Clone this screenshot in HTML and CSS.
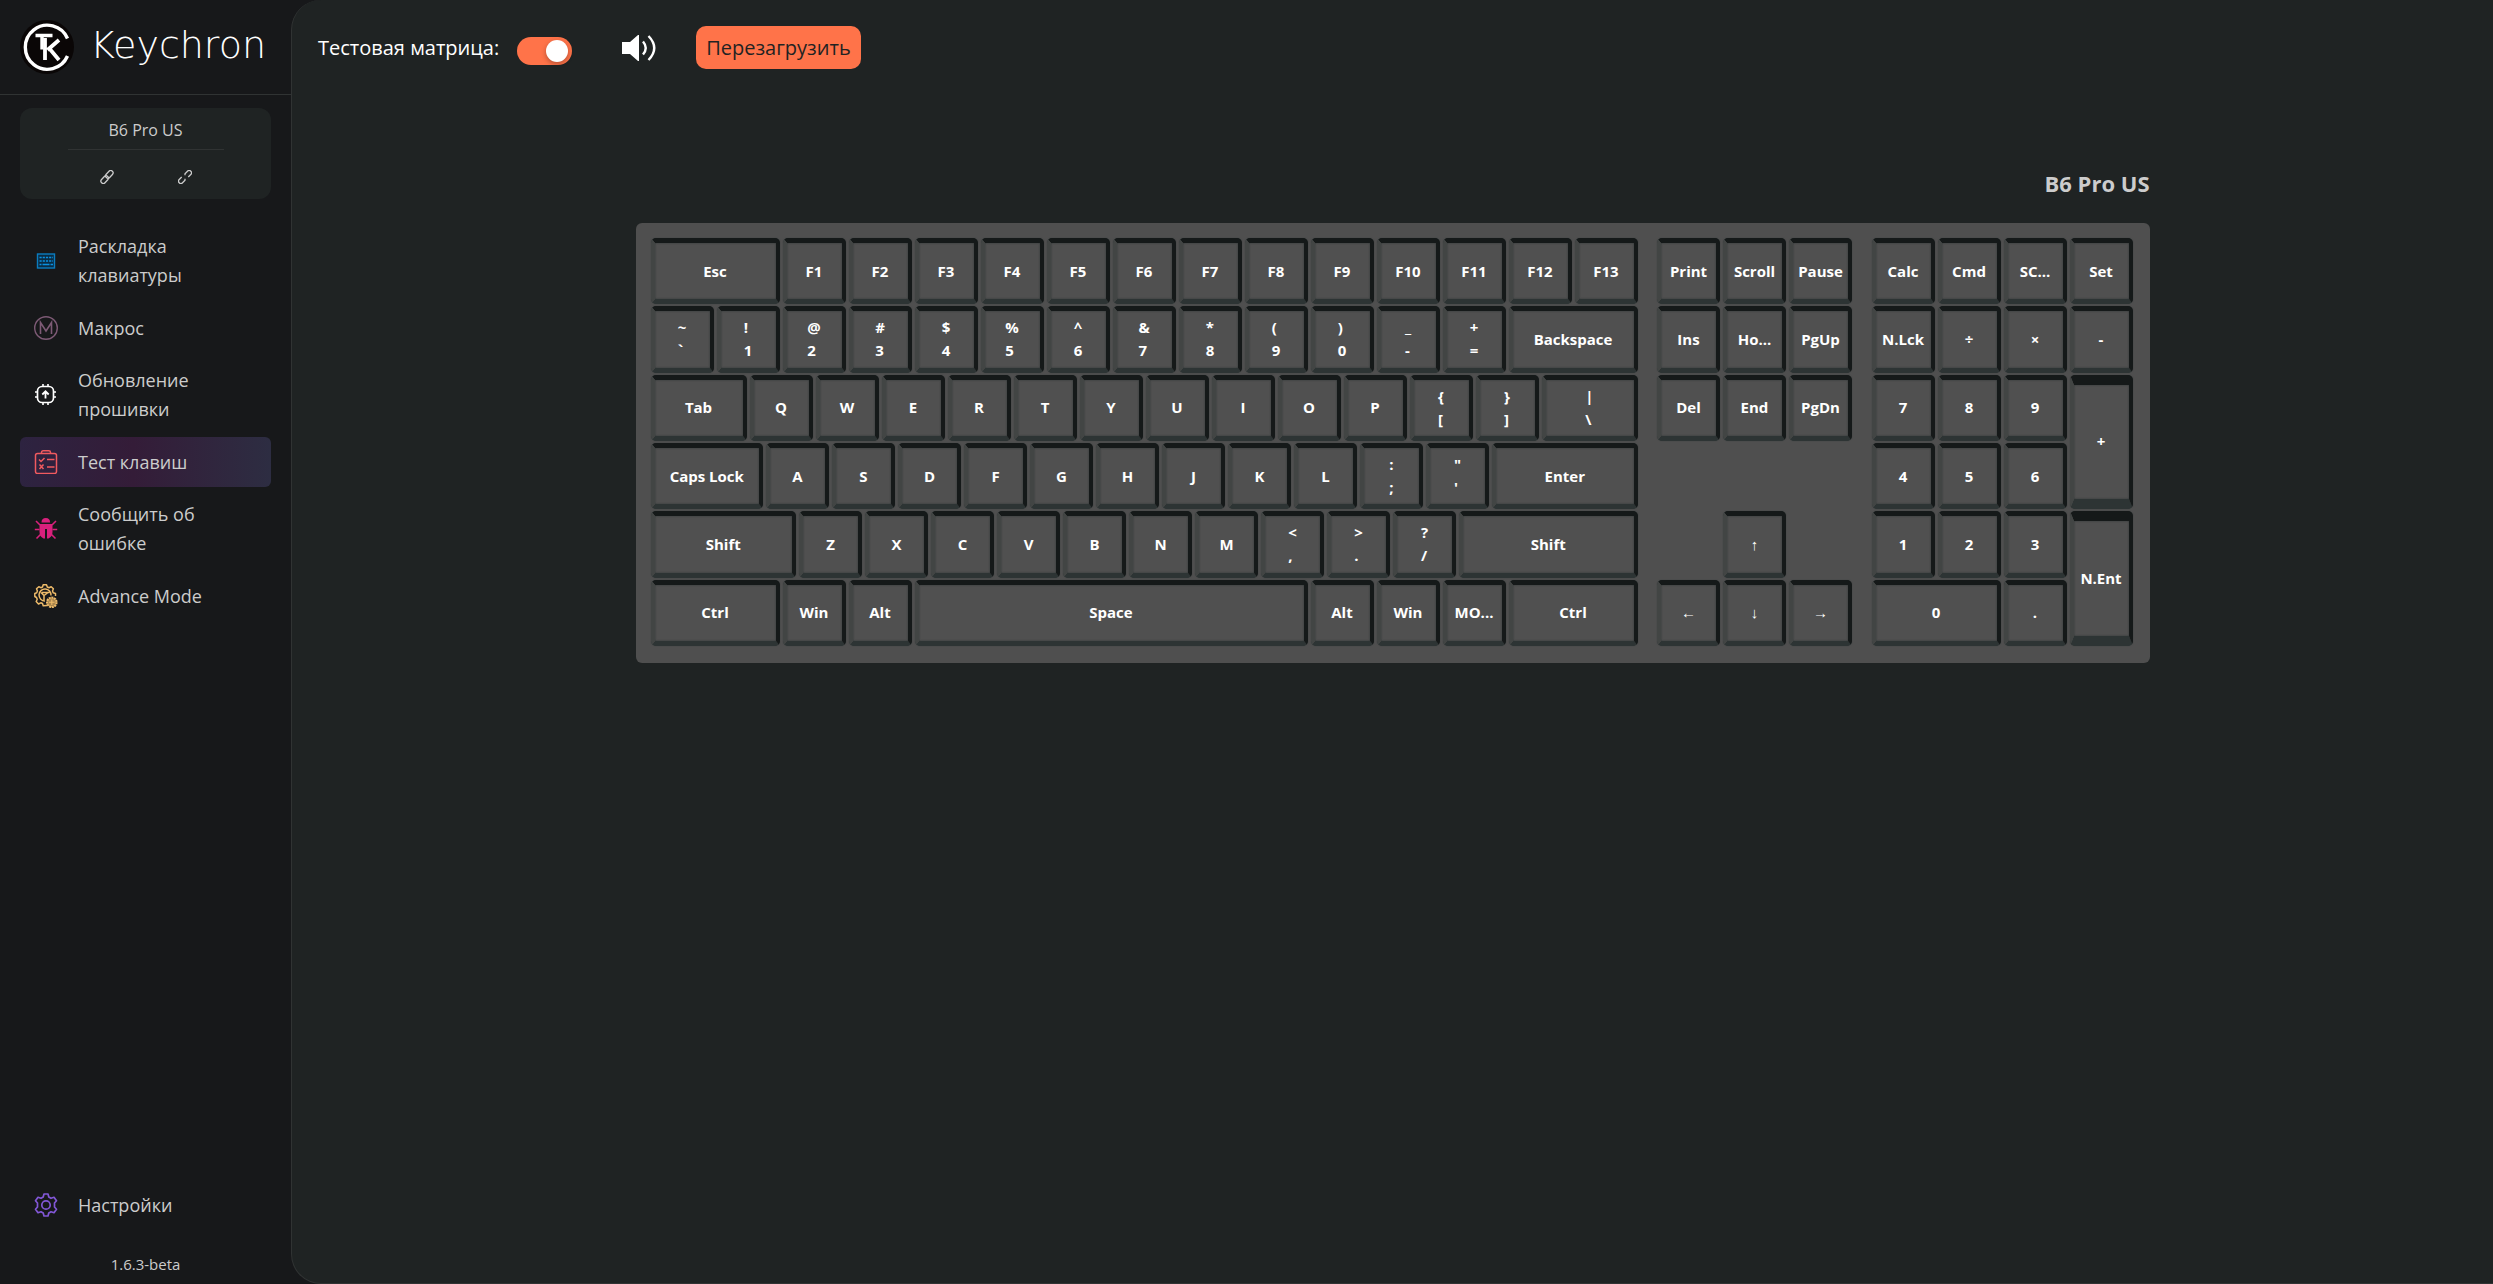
FILE: index.html
```html
<!DOCTYPE html>
<html lang="ru">
<head>
  <meta charset="UTF-8" />
  <meta name="viewport" content="width=device-width, initial-scale=1.0" />
  <title>Keychron</title>
  <link rel="stylesheet" href="styles.css">
</head>
<body>
  <aside class="sidebar">
    <div class="brand">
      <svg class="brand-mark" viewBox="0 0 54 54" aria-hidden="true">
        <circle cx="27" cy="27" r="27" fill="#0a0606" />
        <g fill="none" stroke="#fff">
          <path d="M47.500 18.500A22 22 0 1 0 47.500 36" stroke-width="3.400" />
          <path d="M15.500 15.500H32.500M22 15.500V29.500" stroke-width="3.400" />
          <path d="M25 18V40M39 20L27.500 30M29 28L39 40" stroke-width="3.800" />
        </g>
      </svg>
      <span class="brand-name">Keychron</span>
    </div>

    <div class="device">
      <div class="device-name">B6 Pro US</div>
      <div class="device-links">
        <svg viewBox="0 0 24 24" aria-hidden="true">
          <g fill="none" stroke="#ccc" stroke-width="2.200">
            <rect x="8.500" y="3.500" width="15" height="8" rx="4" transform="rotate(-47 16 7.500)" />
            <rect x=".5" y="12.500" width="15" height="8" rx="4" transform="rotate(-47 8 16.500)" />
          </g>
        </svg>
        <svg viewBox="0 0 24 24" aria-hidden="true">
          <g fill="none" stroke="#ccc" stroke-width="2.200" transform="rotate(-45 12 12)">
            <path d="M8 8H2A4 4 0 0 0 2 16H8L10 14" />
            <path d="M16 16H22A4 4 0 0 0 22 8H16L14 10" />
          </g>
        </svg>
      </div>
    </div>

    <nav class="menu">
      <a href="#keymap">
        <svg viewBox="0 0 24 24" aria-hidden="true">
          <rect x="3.500" y="5" width="17" height="14" fill="#0a2c44" stroke="#0b7cc0" stroke-width="1.400" />
          <path d="M5.500 8.500H19M5.500 12H19" stroke="#0b90e0" stroke-width="1.300" stroke-dasharray="2.200 1" />
          <path d="M5.500 15.500H7.500M8.500 15.500H15.500M16.500 15.500H19" stroke="#0b90e0" stroke-width="1.300" />
        </svg>
        <span>Раскладка клавиатуры</span>
      </a>
      <a href="#macro">
        <svg viewBox="0 0 24 24" fill="none" stroke="#7d5a75" aria-hidden="true">
          <circle cx="12" cy="12" r="11.300" stroke-width="1.400" />
          <path d="M6.500 18V6.500L12 15L17.500 6.500V18" stroke-width="1.600" />
        </svg>
        <span>Макрос</span>
      </a>
      <a href="#firmware">
        <svg viewBox="0 0 24 24" fill="none" stroke="#fff" aria-hidden="true">
          <rect x="3.500" y="3.500" width="16" height="16" rx="4.500" stroke-width="1.700" />
          <path d="M9 1V3.500M14 1V3.500M9 19.500V22M14 19.500V22M1 9H3.500M1 14H3.500M19.500 9H22M19.500 14H22" stroke-width="1.600" />
          <path d="M11.500 15.500V8.500M8.300 11.500L11.500 8.300L14.700 11.500" stroke-width="1.800" />
        </svg>
        <span>Обновление прошивки</span>
      </a>
      <a href="#test" class="active">
        <svg viewBox="0 0 24 24" fill="none" stroke="#f05a5f" stroke-width="1.500" aria-hidden="true">
          <rect x="1.500" y="3.500" width="21" height="20" rx="2" />
          <path d="M7.500 3.500V2.500Q7.500 .8 9.200 .8H14.800Q16.500 .8 16.500 2.500V3.500" />
          <path d="M5 9.500L7 11.500L10.500 8M13 9.500H20.500M5.500 14.500L9.500 19M9.500 14.500L5.500 19M13 17H20.500" />
        </svg>
        <span>Тест клавиш</span>
      </a>
      <a href="#bug">
        <svg viewBox="0 0 24 24" aria-hidden="true">
          <path d="M7.500 5.500Q7.500 1 11.800 1T16.100 5.500Z" fill="#d9207c" />
          <path d="M5.500 7H18.500V15Q18.500 19.500 14.500 21.500H13V12H11V21.500H9.500Q5.500 19.500 5.500 15Z" fill="#d9207c" />
          <path d="M2 4L6 8M22 4L18 8M.8 12.500H5.500M18.500 12.500H23.200M2.500 21.500L6.500 17.500M21.500 21.500L17.500 17.500" stroke="#d9207c" stroke-width="1.600" />
        </svg>
        <span>Сообщить об ошибке</span>
      </a>
      <a href="#advance">
        <svg viewBox="0 0 24 24" fill="none" stroke="#eebb6a" stroke-width="1.500" stroke-linejoin="round" aria-hidden="true">
          <path d="M13 21.500L9.200 21.800L8.500 19.500L6.800 18.800L4.500 20L2.200 17.500L3.200 15.300L2.500 13.500L.8 12.500V9.500L2.700 8.800L3.400 7L2.500 4.800L4.800 2.700L6.800 3.700L8.500 3L9.200 .8H12.500L13.300 3L15 3.700L17.200 2.700L19.400 4.800L18.500 7L19.200 8.800L21.500 9.500V12" />
          <path d="M11 17A6 6 0 1 1 17 11.500M7 8.500L10 11.500L13.500 9M15.500 8.500H8M10 11.500V16" />
          <circle cx="17.800" cy="18.300" r="4.800" stroke-width="2" stroke-dasharray="2 .7" fill="#a9854d" />
          <path d="M15 18.300H20.600M17.800 15.500V21" stroke-width="1.100" />
        </svg>
        <span>Advance Mode</span>
      </a>
    </nav>

    <nav class="menu menu-bottom">
      <a href="#settings">
        <svg viewBox="0 0 24 24" fill="none" stroke="#8257d6" stroke-width="1.700" stroke-linejoin="round" aria-hidden="true">
          <path d="M10 1H14L14.800 4L17 5.300L20 4.300L22.500 7.800L20.500 10V14L22.500 16.200L20 19.700L17 18.700L14.800 20L14 23H10L9.200 20L7 18.700L4 19.700L1.500 16.200L3.500 14V10L1.500 7.800L4 4.300L7 5.300L9.200 4Z" />
          <circle cx="12" cy="12" r="4.200" />
        </svg>
        <span>Настройки</span>
      </a>
    </nav>
    <div class="version">1.6.3-beta</div>
  </aside>

  <main>
    <div class="toolbar">
      <label for="matrix">Тестовая матрица:</label>
      <input type="checkbox" id="matrix" class="switch" checked />
      <button type="button" class="sound" aria-label="Звук">
        <svg viewBox="0 0 34 26" aria-hidden="true">
          <path d="M0 7H8L16 0H17V26H16L8 19H0Z" fill="#fff" />
          <path d="M21 6.500Q26.500 13 21 19.500M26.500 1Q38 13 26.500 25" fill="none" stroke="#fff" stroke-width="2.400" />
        </svg>
      </button>
      <button type="button" class="reload">Перезагрузить</button>
    </div>

    <section class="tester">
      <h2>B6 Pro US</h2>
      <div class="keyboard">
        <!-- row 1 -->
        <kbd class="w8">Esc</kbd>
        <kbd>F1</kbd>
        <kbd>F2</kbd>
        <kbd>F3</kbd>
        <kbd>F4</kbd>
        <kbd>F5</kbd>
        <kbd>F6</kbd>
        <kbd>F7</kbd>
        <kbd>F8</kbd>
        <kbd>F9</kbd>
        <kbd>F10</kbd>
        <kbd>F11</kbd>
        <kbd>F12</kbd>
        <kbd>F13</kbd>
        <i></i>
        <kbd>Print</kbd>
        <kbd>Scroll</kbd>
        <kbd>Pause</kbd>
        <i></i>
        <kbd>Calc</kbd>
        <kbd>Cmd</kbd>
        <kbd>SC...</kbd>
        <kbd>Set</kbd>

        <!-- row 2 -->
        <kbd><span>~<br>`</span></kbd>
        <kbd><span>!<br>1</span></kbd>
        <kbd><span>@<br>2</span></kbd>
        <kbd><span>#<br>3</span></kbd>
        <kbd><span>$<br>4</span></kbd>
        <kbd><span>%<br>5</span></kbd>
        <kbd><span>^<br>6</span></kbd>
        <kbd><span>&amp;<br>7</span></kbd>
        <kbd><span>*<br>8</span></kbd>
        <kbd><span>(<br>9</span></kbd>
        <kbd><span>)<br>0</span></kbd>
        <kbd><span>_<br>-</span></kbd>
        <kbd><span>+<br>=</span></kbd>
        <kbd class="w8">Backspace</kbd>
        <i></i>
        <kbd>Ins</kbd>
        <kbd>Ho...</kbd>
        <kbd>PgUp</kbd>
        <i></i>
        <kbd>N.Lck</kbd>
        <kbd>÷</kbd>
        <kbd>×</kbd>
        <kbd>-</kbd>

        <!-- row 3 -->
        <kbd class="w6">Tab</kbd>
        <kbd>Q</kbd>
        <kbd>W</kbd>
        <kbd>E</kbd>
        <kbd>R</kbd>
        <kbd>T</kbd>
        <kbd>Y</kbd>
        <kbd>U</kbd>
        <kbd>I</kbd>
        <kbd>O</kbd>
        <kbd>P</kbd>
        <kbd><span>{<br>[</span></kbd>
        <kbd><span>}<br>]</span></kbd>
        <kbd class="w6"><span>|<br>\</span></kbd>
        <i></i>
        <kbd>Del</kbd>
        <kbd>End</kbd>
        <kbd>PgDn</kbd>
        <i></i>
        <kbd>7</kbd>
        <kbd>8</kbd>
        <kbd>9</kbd>
        <kbd class="tall">+</kbd>

        <!-- row 4 -->
        <kbd class="w7">Caps Lock</kbd>
        <kbd>A</kbd>
        <kbd>S</kbd>
        <kbd>D</kbd>
        <kbd>F</kbd>
        <kbd>G</kbd>
        <kbd>H</kbd>
        <kbd>J</kbd>
        <kbd>K</kbd>
        <kbd>L</kbd>
        <kbd><span>:<br>;</span></kbd>
        <kbd><span>"<br>'</span></kbd>
        <kbd class="w9">Enter</kbd>
        <i class="w14"></i>
        <kbd>4</kbd>
        <kbd>5</kbd>
        <kbd>6</kbd>

        <!-- row 5 -->
        <kbd class="w9">Shift</kbd>
        <kbd>Z</kbd>
        <kbd>X</kbd>
        <kbd>C</kbd>
        <kbd>V</kbd>
        <kbd>B</kbd>
        <kbd>N</kbd>
        <kbd>M</kbd>
        <kbd><span>&lt;<br>,</span></kbd>
        <kbd><span>&gt;<br>.</span></kbd>
        <kbd><span>?<br>/</span></kbd>
        <kbd class="w11">Shift</kbd>
        <i class="w5"></i>
        <kbd>↑</kbd>
        <i class="w5"></i>
        <kbd>1</kbd>
        <kbd>2</kbd>
        <kbd>3</kbd>
        <kbd class="tall">N.Ent</kbd>

        <!-- row 6 -->
        <kbd class="w8">Ctrl</kbd>
        <kbd>Win</kbd>
        <kbd>Alt</kbd>
        <kbd class="w24">Space</kbd>
        <kbd>Alt</kbd>
        <kbd>Win</kbd>
        <kbd>MO...</kbd>
        <kbd class="w8">Ctrl</kbd>
        <i></i>
        <kbd>←</kbd>
        <kbd>↓</kbd>
        <kbd>→</kbd>
        <i></i>
        <kbd class="w8">0</kbd>
        <kbd>.</kbd>
      </div>
    </section>
  </main>
</body>
</html>
```

FILE: styles.css
```css
:root {
  --side-color: #17181a;
  --bg-color: #1f2323;
  --line-color: #303333;
  --text-color: #ccc;
  --accent-color: #ff7349;
  --key-color: #505050;
}

* {
  box-sizing: border-box;
}

body {
  margin: 0;
  min-height: 100vh;
  display: flex;
  background: var(--side-color);
  color: var(--text-color);
  font-family: "Open Sans", "Noto Sans", sans-serif;
  font-size: 18px;
}

.sidebar {
  width: 291px;
  flex-shrink: 0;
  display: flex;
  flex-direction: column;
}

.brand {
  display: flex;
  align-items: center;
  gap: 16px;
  height: 95px;
  padding-left: 20px;
  border-bottom: 1px solid var(--line-color);
}

.brand-mark {
  width: 54px;
  height: 54px;
}

.brand-name {
  font-family: "DejaVu Sans", sans-serif;
  font-weight: 200;
  font-size: 38px;
  line-height: 40px;
  padding-bottom: 4px;
  color: white;
}

.device {
  margin: 13px 20px 23px;
  height: 91px;
  border-radius: 12px;
  background: var(--bg-color);
  text-align: center;
  font-size: 16px;
}

.device-name {
  width: 156px;
  margin: 0 auto;
  padding-top: 10px;
  line-height: 24px;
  padding-bottom: 7px;
  border-bottom: 1px solid var(--line-color);
}

.device-links {
  display: flex;
  justify-content: center;
  gap: 64px;
  padding-top: 20px;
}

.device-links svg {
  width: 14px;
  height: 14px;
}

.menu {
  display: flex;
  flex-direction: column;
  gap: 3px;
  padding: 0 20px;
}

.menu a {
  display: flex;
  align-items: center;
  gap: 20px;
  min-height: 50px;
  padding: 10px 40px 10px 14px;
  border-radius: 6px;
  line-height: 29px;
  color: inherit;
  text-decoration: none;
}

.menu a.active {
  background: linear-gradient(90deg, #2d2340, #341c38 45%, #2d2d42);
}

.menu svg {
  width: 24px;
  height: 24px;
  flex-shrink: 0;
}

.menu-bottom {
  margin-top: auto;
}

.version {
  padding: 20px 0 6px;
  line-height: 28px;
  font-size: 15px;
  text-align: center;
}

main {
  flex: 1;
  border: 1px solid var(--line-color);
  border-width: 0 0 1px 1px;
  border-radius: 30px 0 0 30px;
  background: var(--bg-color);
}

.toolbar {
  display: flex;
  align-items: center;
  padding: 26px 26px 0;
  font-size: 20px;
  color: white;
}

.switch {
  appearance: none;
  display: flex;
  align-items: center;
  justify-content: flex-end;
  width: 55px;
  height: 28px;
  margin: 6px 50px 0 18px;
  padding: 0 4px;
  border-radius: 14px;
  background: #555;
  cursor: pointer;
}

.switch:checked {
  background: var(--accent-color);
}

.switch::before {
  content: "";
  width: 22px;
  height: 22px;
  border-radius: 50%;
  background: white;
  box-shadow: 0 2px 5px rgba(0, 0, 0, 0.3);
}

.switch:not(:checked) {
  justify-content: flex-start;
}

.sound {
  display: flex;
  padding: 0;
  border: 0;
  background: none;
  cursor: pointer;
}

.sound svg {
  width: 34px;
  height: 26px;
}

.reload {
  height: 43px;
  margin-left: 40px;
  padding: 0 10px;
  border: 0;
  border-radius: 10px;
  background: var(--accent-color);
  color: var(--bg-color);
  font: inherit;
  cursor: pointer;
}

.tester {
  width: fit-content;
  margin: 99px auto 0;
}

h2 {
  margin: 0 0 25px;
  font-size: 22px;
  line-height: 30px;
  text-align: right;
}

/* every column is a quarter of a key */
.keyboard {
  display: grid;
  grid-template-columns: repeat(90, 1fr);
  grid-template-rows: repeat(6, 1fr);
  gap: 2px 3px;
  width: 1514px;
  height: 440px;
  padding: 15px 17px 17px 15px;
  border-radius: 6px;
  background: #4f4f4f;
}

kbd {
  grid-column: span 4;
  display: flex;
  align-items: center;
  justify-content: center;
  border: solid;
  border-width: 5px 4px;
  border-color: #151919 #151919 #2d3434 #424544;
  border-radius: 5px;
  background: var(--key-color);
  box-shadow: 0 0 1px #2d3434, inset 0 0 2px #2d3434;
  color: white;
  font-family: inherit;
  font-size: 15px;
  font-weight: bold;
  line-height: 23px;
}

.w5 { grid-column: span 5; }
.w6 { grid-column: span 6; }
.w7 { grid-column: span 7; }
.w8 { grid-column: span 8; }
.w9 { grid-column: span 9; }
.w11 { grid-column: span 11; }
.w14 { grid-column: span 14; }
.w24 { grid-column: span 24; }

.tall {
  grid-row: span 2;
  border-top-width: 10px;
  border-bottom-width: 10px;
}
```
